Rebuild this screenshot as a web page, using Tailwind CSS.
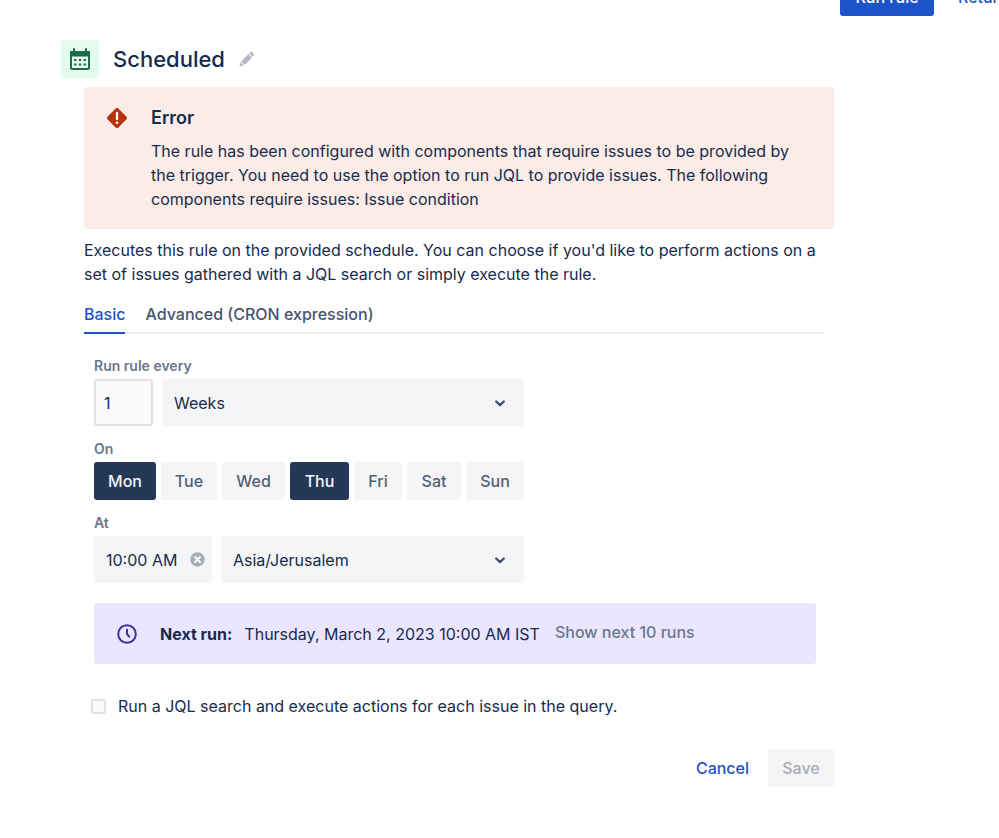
<!DOCTYPE html>
<html lang="en">
<head>
  <meta charset="UTF-8" />
  <meta name="viewport" content="width=device-width, initial-scale=1.0"/>
  <title>Scheduled | Automation</title>
  <script src="https://cdn.jsdelivr.net/npm/@tailwindcss/browser@4"></script>
</head>
<body class="bg-white font-['Inter',sans-serif] text-base text-[#172b4d] overflow-x-hidden">

  <!-- Top actions, scrolled partly out of view -->
  <header class="flex h-4 items-end justify-end overflow-hidden">
    <div class="flex w-[159px] shrink-0 gap-3 whitespace-nowrap font-medium">
      <button class="h-[38px] w-[94px] shrink-0 rounded-[3px] bg-[#1d54c7] text-white">Run rule</button>
      <button class="h-[38px] shrink-0 px-3 text-[#1d54c7]">Return to rules</button>
    </div>
  </header>

  <main class="pt-6 pr-[165px] pl-[61px]">

    <!-- Title -->
    <div class="flex items-center">
      <div class="flex size-[38px] items-center justify-center rounded-[3px] bg-[#e3fcef]">
        <svg class="size-6" viewBox="0 0 24 24" fill="none">
          <path d="M3 4h18a1 1 0 0 1 1 1v16a2 2 0 0 1-2 2H4a2 2 0 0 1-2-2V5a1 1 0 0 1 1-1z" fill="#216e4e"/>
          <path d="M4 9.500h16V21H4z" fill="#e3fcef"/>
          <path d="M6 2v4M18 2v4" stroke="#216e4e" stroke-width="2" stroke-linecap="round"/>
          <path d="M6 12h2.500v2H6zM10.800 12h2.500v2h-2.500zM15.500 12H18v2h-2.500zM6 16.500h2.500v2H6zM10.800 16.500h2.500v2h-2.500zM15.500 16.500H18v2h-2.500z" fill="#216e4e"/>
        </svg>
      </div>
      <h1 class="ml-[14px] text-[22px] leading-8 font-medium">Scheduled</h1>
      <button class="ml-[14px]" aria-label="Rename">
        <svg class="size-4" viewBox="0 0 16 16" fill="#b3b9c4">
          <path d="M10.200 2.300l3.500 3.500 1-1a1.300 1.300 0 0 0 0-1.800L13 1.300a1.300 1.300 0 0 0-1.800 0z"/>
          <path d="M9.500 3L13 6.500 5.600 13.900 2.100 10.400z"/>
          <path d="M1.600 11.300l3.100 3.100L1 15.500a.4.4 0 0 1-.5-.5z"/>
        </svg>
      </button>
    </div>

    <div class="pl-[23px]">
      <!-- Error -->
      <section class="mt-[9px] flex rounded-[3px] bg-[#fbece7] px-[22px] pt-[19px] pb-[18px]">
        <svg class="mt-px size-[22px] shrink-0" viewBox="0 0 22 22">
          <path d="M9.400 1.700L1.700 9.400a2.200 2.200 0 0 0 0 3.200l7.700 7.700a2.200 2.200 0 0 0 3.200 0l7.700-7.700a2.200 2.200 0 0 0 0-3.200l-7.700-7.700a2.200 2.200 0 0 0-3.200 0z" fill="#b7320f"/>
          <path d="M11 6v6" stroke="#fff" stroke-width="2.300" stroke-linecap="round"/>
          <circle cx="11" cy="15.700" r="1.300" fill="#fff"/>
        </svg>
        <div class="ml-[23px]">
          <h2 class="text-lg leading-6 font-semibold">Error</h2>
          <p class="mt-[9px] leading-6">The rule has been configured with components that require issues to be provided by the trigger. You need to use the option to run JQL to provide issues. The following components require issues: Issue condition</p>
        </div>
      </section>

      <p class="mt-[9px] leading-6">Executes this rule on the provided schedule. You can choose if you'd like to perform actions on a set of issues gathered with a JQL search or simply execute the rule.</p>

      <!-- Tabs -->
      <div class="mt-4 mr-[9px] flex gap-5 border-b-2 border-[#ebecf0] leading-6 font-medium" role="tablist">
        <button class="-mb-0.5 border-b-2 border-[#1d54c7] pb-[6px] text-[#1d54c7]" role="tab" aria-selected="true">Basic</button>
        <button class="-mb-0.5 border-b-2 border-transparent pb-[6px] text-[#44546f]" role="tab" aria-selected="false">Advanced (CRON expression)</button>
      </div>

      <!-- Schedule -->
      <form>
        <div class="mt-[23px] mr-[18px] ml-[10px]">
          <div class="w-[430px]">
            <label for="interval" class="block text-sm leading-[18px] font-semibold text-[#6b778c]">Run rule every</label>
            <div class="mt-1 flex h-[47px] gap-[9px]">
              <input id="interval" type="text" value="1" class="w-[59px] rounded-[3px] border-2 border-[#dfe1e6] bg-[#fafbfc] px-2">
              <div class="relative flex-1">
                <select aria-label="Unit" class="h-full w-full appearance-none rounded-[3px] bg-[#f4f5f7] px-3">
                  <option>Weeks</option>
                </select>
                <svg class="pointer-events-none absolute top-4 right-4 size-4" viewBox="0 0 16 16" fill="none" stroke="#44546f" stroke-width="2.400" stroke-linecap="round" stroke-linejoin="round"><path d="M4.200 6.500L8 10.200l3.800-3.700"/></svg>
              </div>
            </div>

            <p class="mt-[14px] text-sm leading-[18px] font-semibold text-[#6b778c]">On</p>
            <div class="mt-1 flex h-[38px] gap-[5px] font-medium text-[#505f79]">
              <button type="button" class="w-[62px] rounded-[3px] bg-[#253858] text-[#f4f5f7]">Mon</button>
              <button type="button" class="w-14 rounded-[3px] bg-[#f5f5f5]">Tue</button>
              <button type="button" class="w-[63px] rounded-[3px] bg-[#f5f5f5]">Wed</button>
              <button type="button" class="w-[59px] rounded-[3px] bg-[#253858] text-[#f4f5f7]">Thu</button>
              <button type="button" class="w-12 rounded-[3px] bg-[#f5f5f5]">Fri</button>
              <button type="button" class="w-[54px] rounded-[3px] bg-[#f5f5f5]">Sat</button>
              <button type="button" class="flex-1 rounded-[3px] bg-[#f5f5f5]">Sun</button>
            </div>

            <label for="time" class="mt-[14px] block text-sm leading-[18px] font-semibold text-[#6b778c]">At</label>
            <div class="mt-1 flex h-[47px] gap-[9px]">
              <div class="flex w-[118px] items-center rounded-[3px] bg-[#f4f5f7] pr-[7px] pl-3">
                <input id="time" type="text" value="10:00 AM" class="w-full min-w-0 bg-transparent">
                <button type="button" class="shrink-0" aria-label="Clear time">
                  <svg class="size-[15px]" viewBox="0 0 15 15"><circle cx="7.500" cy="7.500" r="7.200" fill="#a5adba"/><path d="M5 5l5 5M10 5l-5 5" stroke="#fff" stroke-width="1.900" stroke-linecap="round"/></svg>
                </button>
              </div>
              <div class="relative flex-1">
                <select aria-label="Time zone" class="h-full w-full appearance-none rounded-[3px] bg-[#f4f5f7] px-3">
                  <option>Asia/Jerusalem</option>
                </select>
                <svg class="pointer-events-none absolute top-4 right-4 size-4" viewBox="0 0 16 16" fill="none" stroke="#44546f" stroke-width="2.400" stroke-linecap="round" stroke-linejoin="round"><path d="M4.200 6.500L8 10.200l3.800-3.700"/></svg>
              </div>
            </div>
          </div>

          <!-- Next run -->
          <div class="mt-5 flex h-[61px] items-center rounded-[3px] bg-[#eae6ff] pl-[23px]">
            <svg class="size-5 shrink-0" viewBox="0 0 20 20" fill="none" stroke="#403294" stroke-linecap="round" stroke-linejoin="round"><circle cx="10" cy="10" r="8.800" stroke-width="2"/><path d="M10 5.700V10l2.200 2.700" stroke-width="2"/></svg>
            <p class="ml-[23px]"><strong class="mr-3 font-bold">Next run:</strong>Thursday, March 2, 2023 10:00 AM IST</p>
            <button type="button" class="mb-[3px] ml-[15px] font-medium text-[#6b778c]">Show next 10 runs</button>
          </div>
        </div>

        <label class="mt-[30px] ml-[7px] flex items-center gap-3 leading-6">
          <input type="checkbox" class="size-[15px] appearance-none rounded-[3px] border-2 border-[#dfe1e6] bg-[#fafbfc]">
          Run a JQL search and execute actions for each issue in the query.
        </label>

        <div class="mt-[31px] flex justify-end gap-[5px] font-medium">
          <button type="button" class="h-[38px] px-[14px] text-[#1d54c7]">Cancel</button>
          <button type="submit" class="h-[38px] w-[66px] rounded-[3px] bg-[#f5f5f5] text-[#a5adba]" disabled>Save</button>
        </div>
      </form>
    </div>
  </main>

</body>
</html>
